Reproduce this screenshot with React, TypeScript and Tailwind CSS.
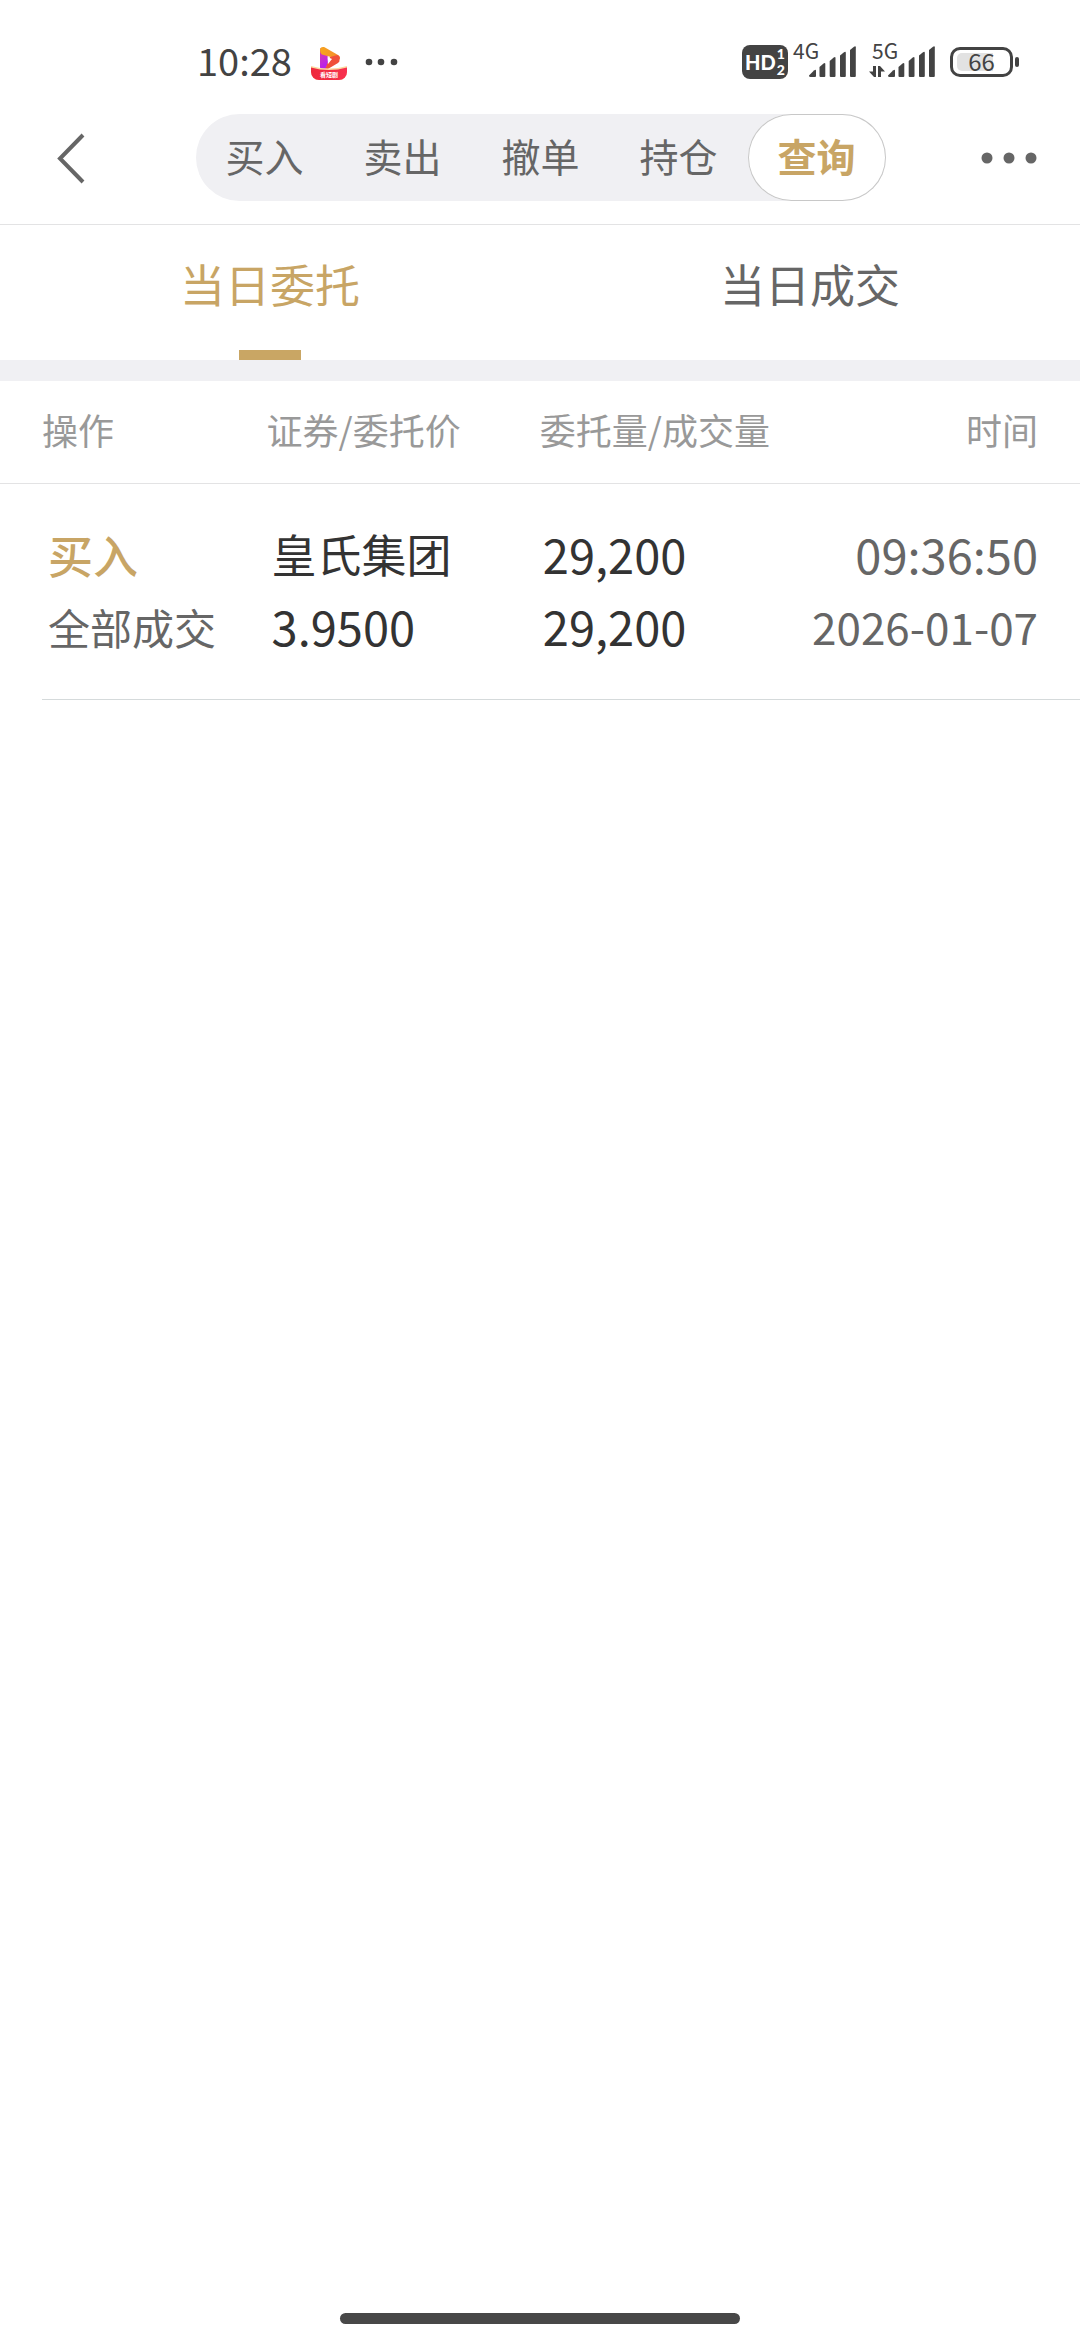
import React from "react";

const navItems = ["买入", "卖出", "撤单", "持仓", "查询"];

const orders = [
  {
    side: "买入",
    status: "全部成交",
    name: "皇氏集团",
    price: "3.9500",
    ordered: "29,200",
    filled: "29,200",
    time: "09:36:50",
    date: "2026-01-07",
  },
];

function PlayAppIcon() {
  return (
    <svg width="38" height="38" viewBox="0 0 38 38" role="img" aria-label="短剧">
      <defs>
        <linearGradient id="bandFill" x1="0" x2="1">
          <stop offset="0" stopColor="#ee2a3c" />
          <stop offset="1" stopColor="#f8304f" />
        </linearGradient>
        <linearGradient id="purpleFill" x1="0" x2="0.3" y1="0" y2="1">
          <stop offset="0" stopColor="#e0409a" />
          <stop offset="1" stopColor="#b41df5" />
        </linearGradient>
        <linearGradient id="orangeFill" x1="0" x2="1">
          <stop offset="0" stopColor="#f7a51c" />
          <stop offset="1" stopColor="#f48a2c" />
        </linearGradient>
        <clipPath id="iconClip">
          <rect x="1" y="1" width="36" height="36" rx="8" />
        </clipPath>
      </defs>
      <g clipPath="url(#iconClip)">
        <rect x="1" y="1" width="36" height="36" fill="#ffffff" />
        <path d="M10 7q0-3 3-2l6 11-3 10-3 1q-3 0-3-3z" fill="url(#purpleFill)" />
        <path d="M10 7c0-3 3-3.500 5-2.500l13 7.500q3 2 1.500 4.500L12 11.500Q10 10 10 7z" fill="url(#orangeFill)" />
        <path d="M29.500 16.500c1-2-.5-4-2-4.500L20 14l-4 10q-1 3-3 3 2 1 4-.5l11-6.500q2-1.500 1.500-3.500z" fill="#f0503a" />
        <path d="M17.500 14l4.500 2-4 5z" fill="#ffffff" />
        <path d="M1 23q18 5 36 0v16H1z" fill="#fbd9a0" />
        <path d="M1 24.500q18 5 36 0V38H1z" fill="url(#bandFill)" />
      </g>
      <text x="19" y="34" fontSize="6" fontWeight="700" textAnchor="middle" fill="#ffffff">
        看短剧
      </text>
    </svg>
  );
}

function SignalBars() {
  return (
    <svg width="48" height="32" viewBox="0 0 48 32" fill="#434343" aria-hidden="true">
      <path d="M0 29.500l5-5q2-1.500 2-.2V30q0 1-1 1H1.500Q0 31 0 29.500z" />
      <path d="M10.500 21l4-3.500q1.800-1.200 1.800.5V30q0 1-1 1h-3.800q-1 0-1-1z" />
      <path d="M20.700 15l4-3.500q1.800-1.200 1.800.5V30q0 1-1 1h-3.800q-1 0-1-1z" />
      <path d="M31 9.500l4-3.200q1.800-1.200 1.800.5V30q0 1-1 1H32q-1 0-1-1z" />
      <path d="M41 4l4-3.200q1.800-1.200 1.800.5V30q0 1-1 1H42q-1 0-1-1z" />
    </svg>
  );
}

function DataArrows() {
  return (
    <svg width="16" height="13" viewBox="0 0 16 13" fill="#434343" aria-hidden="true">
      <path d="M4 1h3v11H5L0 6.500h4z" />
      <path d="M9 12V1h2l5 5.500h-4V12z" />
    </svg>
  );
}

function StatusBar() {
  return (
    <div className="flex h-[114px] items-start justify-between pt-[42px] pr-[61px] pl-[197px] text-[#434343]">
      <div className="flex h-10 items-center">
        <span className="pb-1 text-[38px] leading-9">10:28</span>
        <span className="ml-[18px]">
          <PlayAppIcon />
        </span>
        <svg className="ml-[16px]" width="34" height="10" viewBox="0 0 34 10" fill="#434343" aria-hidden="true">
          <circle cx="5" cy="5" r="3.300" />
          <circle cx="17" cy="5" r="3.300" />
          <circle cx="30" cy="5" r="3.300" />
        </svg>
      </div>
      <div className="flex h-10 items-center">
        <div className="flex h-[34px] w-[46px] items-center justify-center gap-px rounded-lg bg-[#434343] font-[Lato,sans-serif] font-black text-white">
          <span className="text-[20px] leading-6">HD</span>
          <span className="flex flex-col text-[14px] leading-4">
            <span>1</span>
            <span>2</span>
          </span>
        </div>
        <div className="relative ml-[21px]">
          <span className="absolute -top-1.5 -left-4 text-[21px] leading-5">4G</span>
          <SignalBars />
        </div>
        <div className="relative ml-[31px]">
          <span className="absolute -top-1.5 -left-4 text-[21px] leading-5">5G</span>
          <span className="absolute bottom-0 -left-[19px]">
            <DataArrows />
          </span>
          <SignalBars />
        </div>
        <div className="ml-[14px] flex items-center gap-0.5">
          <div className="relative flex h-[30px] w-[63px] items-center justify-center rounded-[10px] border-[3px] border-[#434343]">
            <span className="absolute inset-y-[3px] left-1 w-9 rounded-l-[5px] bg-[#e2e2e2]" />
            <span className="relative pb-0.5 text-[24px] leading-6">66</span>
          </div>
          <span className="h-2.5 w-1 rounded-full bg-[#434343]" />
        </div>
      </div>
    </div>
  );
}

function NavBar() {
  return (
    <header className="flex items-start justify-between border-b border-[#e3e3e4] pr-[41px] pb-[23px] pl-[51px]">
      <button type="button" aria-label="返回" className="flex h-[87px] w-10 items-center">
        <svg width="40" height="56" viewBox="0 0 40 56" fill="none" stroke="#666666" strokeWidth="4" aria-hidden="true">
          <path d="M32 5L9 28.500L32 52" />
        </svg>
      </button>
      <nav className="ml-[11px] flex h-[87px] w-[690px] rounded-full bg-[#f0f0f3]">
        {navItems.map((item) => (
          <button
            key={item}
            type="button"
            className={
              item === "查询"
                ? "flex-1 rounded-full bg-white pb-1 text-[39px] leading-none font-bold text-[#c8a565] ring-1 ring-[#c8c8c8] ring-inset"
                : "flex-1 pb-1 text-[39px] leading-none text-[#666666]"
            }
          >
            {item}
          </button>
        ))}
      </nav>
      <button type="button" aria-label="更多" className="flex h-[87px] items-center">
        <svg width="60" height="12" viewBox="0 0 60 12" fill="#666666" aria-hidden="true">
          <circle cx="8" cy="6" r="5.500" />
          <circle cx="30" cy="6" r="5.500" />
          <circle cx="52" cy="6" r="5.500" />
        </svg>
      </button>
    </header>
  );
}

function Tabs() {
  return (
    <div role="tablist" className="flex h-[156px] border-b-[21px] border-[#f0f0f3] text-[45px]">
      <button type="button" role="tab" aria-selected="true" className="flex flex-1 flex-col items-center justify-between pt-[29px] text-[#c8a565]">
        <span className="leading-[60px]">当日委托</span>
        <span className="h-2.5 w-[62px] bg-[#c9a664]" />
      </button>
      <button type="button" role="tab" aria-selected="false" className="flex flex-1 flex-col items-center pt-[29px] text-[#666666]">
        <span className="leading-[60px]">当日成交</span>
      </button>
    </div>
  );
}

function Orders() {
  return (
    <>
      <table className="w-full table-fixed border-collapse text-left">
        <colgroup>
          <col className="w-[24.500%]" />
          <col className="w-[25.300%]" />
          <col className="w-1/4" />
          <col />
        </colgroup>
        <thead className="border-b border-[#e3e3e4] text-[36px] leading-[96px] whitespace-nowrap text-[#999999]">
          <tr>
            <th scope="col" className="pb-1.5 pl-[42px] font-normal">操作</th>
            <th scope="col" className="pb-1.5 pl-0.5 font-normal">证券/委托价</th>
            <th scope="col" className="pb-1.5 pl-0.5 font-normal">委托量/成交量</th>
            <th scope="col" className="pr-[42px] pb-1.5 text-right font-normal">时间</th>
          </tr>
        </thead>
        <tbody className="leading-[72px] whitespace-nowrap">
          {orders.map((order) => (
            <tr key={order.time}>
              <td className="pt-[35px] pb-9 pl-12">
                <div className="text-[45px] font-medium text-[#c8a565]">{order.side}</div>
                <div className="text-[42px] text-[#666666]">{order.status}</div>
              </td>
              <td className="pt-[34px] pb-[37px] pl-[7px] text-[#333333]">
                <div className="text-[45px]">{order.name}</div>
                <div className="text-[47px]">{order.price}</div>
              </td>
              <td className="pt-[34px] pb-[37px] pl-[5px] text-[47px] text-[#333333]">
                <div>{order.ordered}</div>
                <div>{order.filled}</div>
              </td>
              <td className="pt-[34px] pr-[42px] pb-[37px] text-right text-[#666666]">
                <div className="text-[47px]">{order.time}</div>
                <div className="text-[44px]">{order.date}</div>
              </td>
            </tr>
          ))}
        </tbody>
      </table>
      <hr className="ml-[42px] border-[#d5dadb]" />
    </>
  );
}

export default function App() {
  return (
    <div className="flex min-h-screen flex-col bg-white font-['Noto_Sans_CJK_SC',sans-serif]">
      <StatusBar />
      <NavBar />
      <main className="flex-1">
        <Tabs />
        <Orders />
      </main>
      <div className="mx-auto mb-4 h-[11px] w-[37%] rounded-full bg-[#484848]" />
    </div>
  );
}
